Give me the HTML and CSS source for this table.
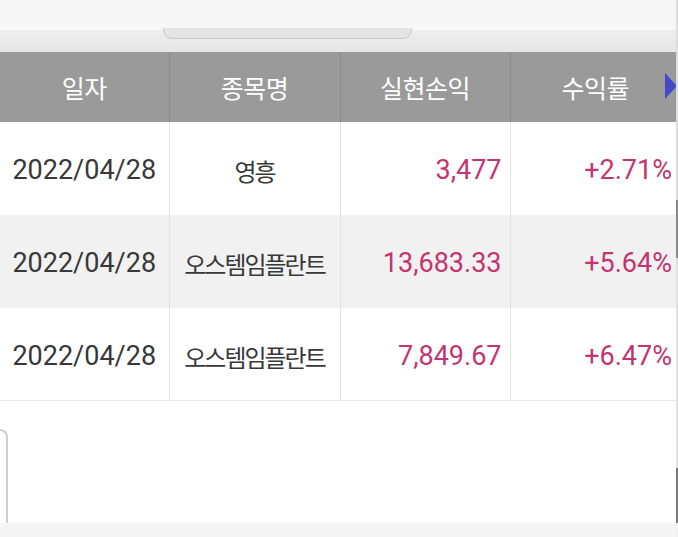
FILE: index.html
```html
<!DOCTYPE html>
<html lang="ko">
<head>
<meta charset="utf-8">
<link rel="stylesheet" href="styles.css">
</head>
<body>
<div class="page">
  <div class="main">
    <div class="top"></div>
    <div class="band"><div class="handle"></div></div>
    <div class="table-clip">
      <table class="grid">
        <colgroup>
          <col class="c1"><col class="c2"><col class="c3"><col class="c4">
        </colgroup>
        <thead>
          <tr>
            <th>일자</th>
            <th>종목명</th>
            <th>실현손익</th>
            <th>수익률</th>
          </tr>
        </thead>
        <tbody>
          <tr>
            <td class="date">2022/04/28</td>
            <td class="name">영흥</td>
            <td class="num">3,477</td>
            <td class="num">+2.71%</td>
          </tr>
          <tr class="alt">
            <td class="date">2022/04/28</td>
            <td class="name">오스템임플란트</td>
            <td class="num">13,683.33</td>
            <td class="num">+5.64%</td>
          </tr>
          <tr>
            <td class="date">2022/04/28</td>
            <td class="name">오스템임플란트</td>
            <td class="num">7,849.67</td>
            <td class="num">+6.47%</td>
          </tr>
        </tbody>
      </table>
      <div class="arrow"></div>
    </div>
    <div class="lower">
      <div class="box"></div>
    </div>
    <div class="footer"></div>
  </div>
  <div class="rail">
    <div class="rail-a"></div>
    <div class="rail-b"></div>
    <div class="rail-c"></div>
    <div class="rail-d"></div>
    <div class="rail-e"></div>
  </div>
</div>
</body>
</html>
```
FILE: styles.css
```css
html, body {
  margin: 0;
  padding: 0;
  background: #ffffff;
}
body {
  font-family: Roboto, "Noto Sans CJK KR", sans-serif;
  width: 678px;
  height: 537px;
  overflow: hidden;
}
.page {
  display: flex;
  height: 537px;
}
.main {
  width: 676px;
  display: flex;
  flex-direction: column;
}
.top {
  height: 30px;
  background: #f7f7f7;
}
.band {
  position: relative;
  height: 22px;
  background: linear-gradient(#eeeeee, #e6e6e6);
}
.handle {
  position: absolute;
  left: 163px;
  top: -2px;
  width: 247px;
  height: 10px;
  background: #e4e4e4;
  border: 1px solid #c9c9c9;
  border-top: none;
  border-radius: 0 0 9px 9px;
}
.table-clip {
  position: relative;
  overflow: hidden;
  height: 350px;
}
.grid {
  border-collapse: collapse;
  table-layout: fixed;
  width: 680px;
}
.c1 { width: 169px; }
.c2 { width: 171px; }
.c3 { width: 170px; }
.c4 { width: 170px; }
.grid th {
  height: 70px;
  padding: 0;
  background: #9a9a9a;
  color: #ffffff;
  font-family: "Noto Sans CJK KR", sans-serif;
  font-weight: 400;
  font-size: 25px;
  letter-spacing: -0.5px;
  text-align: center;
  border-left: 1px solid #8c8c8c;
}
.grid th:first-child { border-left: none; }
.grid td {
  height: 93px;
  box-sizing: border-box;
  padding: 4px 8px 0;
  font-size: 27px;
  color: #383838;
  border-left: 1px solid #e2e2e2;
  white-space: nowrap;
}
.grid td:first-child { border-left: none; }
.grid tbody tr:last-child td { border-bottom: 1px solid #eaeaea; }
.grid tr.alt td { background: #f1f1f1; }
.date { text-align: center; }
.grid td.name {
  text-align: center;
  font-family: "Noto Sans CJK KR", sans-serif;
  font-size: 24px;
  letter-spacing: -2px;
}
.grid td.num {
  text-align: right;
  color: #c4346e;
}
.arrow {
  position: absolute;
  left: 665px;
  top: 21px;
  width: 0;
  height: 0;
  border-top: 13px solid transparent;
  border-bottom: 13px solid transparent;
  border-left: 12px solid #4549c9;
}
.lower {
  flex: 1;
  padding-top: 28px;
}
.box {
  width: 6px;
  height: 92px;
  border-top: 2px solid #cfcfcf;
  border-right: 2px solid #cfcfcf;
  border-radius: 0 10px 0 0;
}
.footer {
  height: 14px;
  background: #f5f5f5;
}
.rail {
  width: 2px;
  display: flex;
  flex-direction: column;
}
.rail-a { height: 200px; background: #dcdcdc; }
.rail-b { height: 58px; background: #8a8a8a; }
.rail-c { height: 210px; background: #e2e2e2; }
.rail-d { height: 55px; background: #7a7a7a; }
.rail-e { flex: 1; background: #f0f0f0; }
```
